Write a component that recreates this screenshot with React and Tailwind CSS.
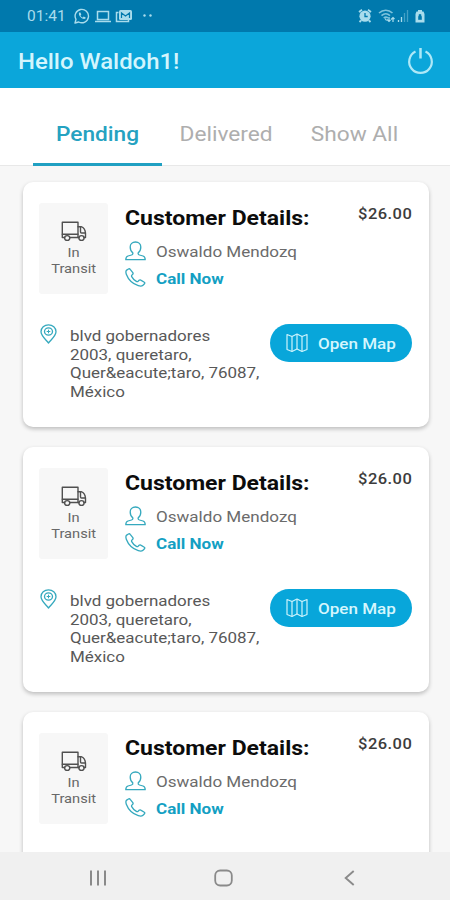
function Truck() {
  return (
    <svg className="h-[21px] w-[26px]" viewBox="0 0 26 21" fill="none" stroke="#505050" strokeWidth="1.4" strokeLinejoin="round" strokeLinecap="round">
      <path d="M3.600 16.500H1.300V1.200h15.700v15.300H8.800" />
      <path d="M17 5.700h3.200c2.500.9 4 3.200 4.300 6.300v4.500h-1.500M17 16.500h1M19.500 5.700v5.300c0 .7.300 1 1 1h4M1.300 13.300h15.700" />
      <ellipse cx="6.200" cy="17" rx="2.600" ry="2.400" />
      <ellipse cx="20.500" cy="17" rx="2.600" ry="2.400" />
    </svg>
  );
}

function Person() {
  return (
    <svg className="h-5 w-[21px]" viewBox="0 0 21 20" fill="none" stroke="#35a9be" strokeWidth="1.300" strokeLinejoin="round">
      <path d="M10.500 1C7.200 1 5.200 3 5.200 6c0 2.600 1.100 4.700 2.600 5.700.3 1.200-.1 1.900-1.300 2.300l-3.500 1C1.500 15.500.8 16.700.8 18.700h19.400c0-2-.7-3.200-2.200-3.700l-3.500-1c-1.200-.4-1.600-1.100-1.300-2.300 1.500-1 2.600-3.100 2.600-5.700 0-3-2-5-5.300-5Z" />
    </svg>
  );
}

function Phone() {
  return (
    <svg className="h-[19px] w-[21px]" viewBox="0 0 21 19" fill="none" stroke="#35a9be" strokeWidth="1.300" strokeLinejoin="round">
      <path d="M3.400 1 1.700 2.100C.7 3 .7 4.500 1.300 6.200c2 5.300 6.300 9.500 12 11.500 1.800.6 3.600.6 4.700-.5l1.500-1.500c.5-.5.400-1.100-.2-1.500l-3.500-2.100c-.6-.4-1.200-.3-1.700.2l-1.100 1.100c-.5.400-1 .4-1.600 0-2-1.200-3.700-2.900-4.700-4.800-.3-.6-.2-1.100.2-1.500l.8-.8c.5-.5.500-1 .1-1.600L5.200 1.400C4.700.7 4.100.6 3.400 1Z" />
    </svg>
  );
}

function Pin() {
  return (
    <svg className="h-5 w-[17px]" viewBox="0 0 17 20" fill="none" stroke="#35a9be" strokeWidth="1.300" strokeLinejoin="round">
      <path d="M8.500 19C5 14.800 1 11.500 1 7.700a7.500 6.900 0 0 1 15 0C16 11.500 12 14.800 8.500 19Z" />
      <ellipse cx="8.500" cy="7.500" rx="4" ry="3.700" />
      <path d="M8.500 5.700v3.600M6.700 7.500h3.600" strokeWidth="1" />
    </svg>
  );
}

function MapIcon() {
  return (
    <svg className="h-5 w-[22px]" viewBox="0 0 22 20" fill="none" stroke="#cdf3fc" strokeWidth="1.200" strokeLinejoin="round">
      <path d="M1 1.500 6 3.500 11 1l5 2.500 5-2V16.500l-5 2-5-2.500-5 2.500-5-2Z" />
      <path d="M6 3.500v15M11 1v15M16 3.500v15" />
    </svg>
  );
}

function DeliveryAddress() {
  return (
    <div className="flex items-start">
      <div className="ml-px pt-px">
        <Pin />
      </div>
      <p className="mt-1 ml-[13px] w-[174px] origin-left scale-x-[1.094] text-[15.500px] leading-[18.500px] whitespace-nowrap text-[#585858]">
        blvd gobernadores
        <br />
        2003, queretaro,
        <br />
        Quer&amp;eacute;taro, 76087,
        <br />
        México
      </p>
      <button className="mt-px ml-auto flex h-[38px] w-[142px] shrink-0 items-center rounded-full bg-[#08a6da] pl-4">
        <MapIcon />
        <span className="mt-[2px] ml-[10px] origin-left scale-x-110 text-[15.500px] leading-5 font-medium whitespace-nowrap text-[#d5f6fd]">Open Map</span>
      </button>
    </div>
  );
}

function OrderCard({ children }) {
  return (
    <article className="flex h-[245px] w-[406px] shrink-0 flex-col rounded-[10px] bg-white pt-[21px] pr-[17px] pl-4 shadow-[0_2px_4px_rgba(0,0,0,0.24)]">
      <div className="flex h-[120px]">
        <div className="flex h-[91px] w-[69px] flex-col items-center rounded-[3px] bg-[#f7f7f7] pt-[18px]">
          <Truck />
          <div className="mt-[2px] scale-x-[1.085] text-center text-[13.500px] leading-[16px] text-[#686868]">
            In
            <br />
            Transit
          </div>
        </div>
        <div className="ml-[17px] flex flex-col">
          <h2 className="h-[29px] origin-left scale-x-[1.095] pt-px text-[21px] leading-[29px] font-bold whitespace-nowrap text-[#0c0c0c]">Customer Details:</h2>
          <div className="mt-[9px] flex h-5 items-center">
            <Person />
            <span className="mt-[2px] ml-[10px] origin-left scale-x-110 text-[15.500px] leading-5 whitespace-nowrap text-[#6b6b6b]">Oswaldo Mendozq</span>
          </div>
          <div className="mt-[6px] flex h-5 items-center">
            <Phone />
            <span className="mt-[3px] ml-[10px] origin-left scale-x-110 text-[15.500px] leading-5 font-bold whitespace-nowrap text-[#139fc3]">Call Now</span>
          </div>
        </div>
        <span className="ml-auto origin-right scale-x-110 pt-[1px] text-[15px] leading-5 font-medium tracking-[0.4px] text-[#3c3c3c]">$26.00</span>
      </div>
      {children}
    </article>
  );
}

function StatusBar() {
  return (
    <div className="flex h-8 shrink-0 items-center bg-[#0079ad] pr-[25px] pl-[27px] text-[#a9dcec]">
      <span className="w-[39px] text-[15.500px] leading-8 whitespace-nowrap">01:41</span>
      <svg className="ml-2 h-4 w-4" viewBox="0 0 16 16" fill="none" stroke="currentColor" strokeWidth="1.400">
        <path d="M1 15l1-3.600A6.700 6.700 0 1 1 4.700 14Z" strokeLinejoin="round" />
        <path d="M5.200 4.500c-1 1.500.2 3.500 1.500 4.800s3.300 2.400 4.800 1.300l.2-1-2-1-.9.9C7.600 9.100 6.900 8.400 6.500 7.500l.8-.9-.9-2Z" fill="currentColor" stroke="none" />
      </svg>
      <svg className="ml-[5px] h-[13px] w-[16px]" viewBox="0 0 16 13" fill="none" stroke="currentColor" strokeWidth="1.500">
        <path d="M2.500 1.500h11v8h-11zM0 11.500h16" />
      </svg>
      <svg className="ml-1 h-[14px] w-[18px]" viewBox="0 0 18 14" fill="none">
        <path d="M3.500 3.500H1.500v9h12v-2" stroke="currentColor" strokeWidth="1.500" />
        <rect x="4" y="1" width="13" height="10" rx="1.500" fill="currentColor" />
        <path d="M6.500 9V4l4 3 4-3v5" stroke="#0079ad" strokeWidth="1.200" />
      </svg>
      <svg className="ml-[10px] h-1 w-[10px]" viewBox="0 0 10 4" fill="currentColor">
        <circle cx="1.500" cy="1.500" r="1.200" />
        <circle cx="7.500" cy="1.500" r="1.200" />
      </svg>
      <svg className="ml-auto h-[14px] w-[14px]" viewBox="0 0 14 14">
        <path d="M1 3 4 .8M13 3 10 .8M3 11.500 1.500 13M11 11.500 12.500 13" stroke="currentColor" strokeWidth="1.800" />
        <circle cx="7" cy="7.200" r="5.600" fill="currentColor" />
        <path d="M7 4v3.500h2.700" fill="none" stroke="#0079ad" strokeWidth="1.300" />
      </svg>
      <svg className="ml-[6px] h-4 w-[18px]" viewBox="0 0 18 16" fill="none" stroke="currentColor" strokeWidth="1.600">
        <path d="M1 5c4-3.700 9.500-3.700 13.500 0M3.500 7.700c2.600-2.300 6-2.300 8.500 0M5.700 10c1.500-1.200 3-1.200 4.300 0" opacity=".75" />
        <path d="M7 10.500 8.500 12.500M11 9v4m-2-1.500 2 2 1.500-1.500M15 14V10m-2 1.500 2-2 1.500 1.500" strokeWidth="1.200" />
      </svg>
      <svg className="ml-px h-[14px] w-[12px]" viewBox="0 0 12 14" stroke="currentColor" strokeWidth="1.300">
        <path d="M1.500 13v-2M4.500 13V8" />
        <path d="M7.500 13V4M10.500 13V1" opacity=".4" />
      </svg>
      <svg className="ml-[6px] h-[14px] w-[10px]" viewBox="0 0 10 14">
        <path d="M3 1h4v1.500h1.500L9.500 5v8.500h-9V5l1-2.500H3z" fill="currentColor" />
        <path d="M3.500 7.500h3v3h-3zM4 7.500V5.500h2v2" fill="#0079ad" stroke="#0079ad" strokeWidth=".6" />
      </svg>
    </div>
  );
}

const tabs = [
  { label: "Pending", style: "w-[129px] border-[#20a0c2] text-[#25a2c1] font-medium" },
  { label: "Delivered", style: "w-[128px] border-transparent text-[#aeaeae]" },
  { label: "Show All", style: "w-[128px] border-transparent text-[#aeaeae]" },
];

export default function App() {
  return (
    <div className="flex h-[900px] w-[450px] flex-col overflow-hidden bg-[#f7f7f7] font-[Roboto,sans-serif]">
      <StatusBar />
      <header className="flex h-14 shrink-0 items-center justify-between bg-[#0ba6da] pr-4 pl-[18px] shadow-[0_1px_0_#b8f3fb]">
        <h1 className="origin-left scale-x-[1.087] pt-1 text-[22px] leading-7 font-medium text-[#d3f5fd]">Hello Waldoh1!</h1>
        <svg className="mt-[2px] h-7 w-[27px]" viewBox="0 0 27 28" fill="none" stroke="#aee8f7" strokeWidth="2.200">
          <path d="M8.500 4.500a11.300 11.300 0 1 0 10 0" />
          <path d="M13.500 1v10.500" strokeWidth="2.500" />
        </svg>
      </header>
      <nav className="flex h-[78px] shrink-0 border-b border-[#e8e8e8] bg-white pl-[33px]">
        {tabs.map((tab) => (
          <button key={tab.label} className={`-mb-px flex h-[78px] items-center justify-center border-b-[3px] pt-[19px] text-[21px] whitespace-nowrap ${tab.style}`}>
            <span className="scale-x-[1.08]">{tab.label}</span>
          </button>
        ))}
      </nav>
      <main className="flex min-h-0 flex-1 flex-col gap-5 overflow-hidden pt-4 pl-[23px]">
        <OrderCard>
          <DeliveryAddress />
        </OrderCard>
        <OrderCard>
          <DeliveryAddress />
        </OrderCard>
        <OrderCard />
      </main>
      <footer className="flex h-12 shrink-0 items-center bg-[#f0f0f0] text-[#8a8a8a]">
        <svg className="mt-1 ml-[89px] h-4 w-[18px]" viewBox="0 0 18 16" stroke="currentColor" strokeWidth="2">
          <path d="M2 .5v15M9 .5v15M16 .5v15" />
        </svg>
        <svg className="mt-1 ml-[107px] h-[18px] w-[19px]" viewBox="0 0 19 18" fill="none" stroke="currentColor" strokeWidth="1.800">
          <rect x="1.200" y="1.500" width="16.600" height="15" rx="5" />
        </svg>
        <svg className="mt-1 ml-[111px] h-4 w-[11px]" viewBox="0 0 11 16" fill="none" stroke="currentColor" strokeWidth="1.900">
          <path d="M9.700 1 1.700 8l8 7" />
        </svg>
      </footer>
    </div>
  );
}
